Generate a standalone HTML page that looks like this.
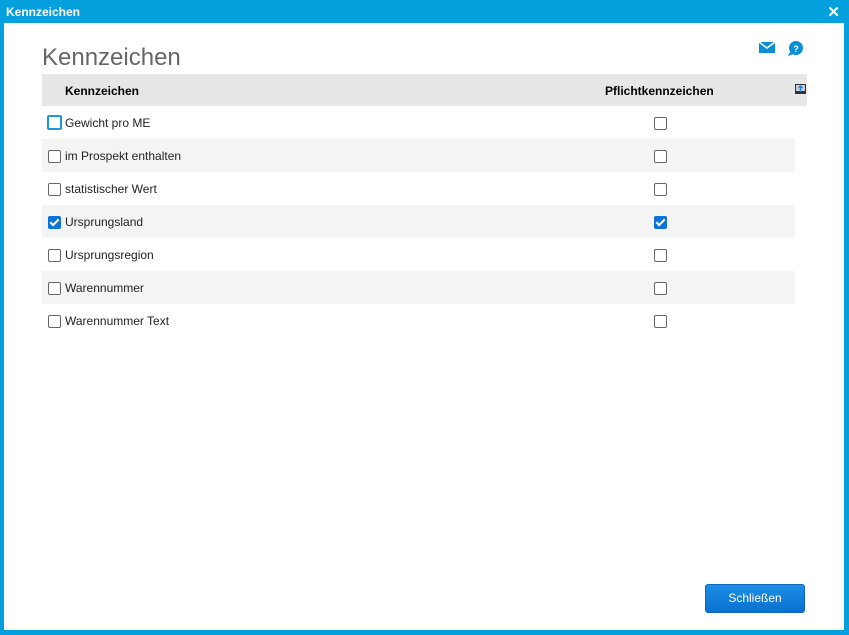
<!DOCTYPE html>
<html><head><style>
body{margin:0;width:849px;height:635px;background:#049fdd;font-family:"Liberation Sans",sans-serif;position:relative;overflow:hidden}
.title{position:absolute;left:6px;top:5px;color:#fff;font-weight:bold;font-size:12px}
.x{position:absolute;right:9px;top:3px;color:#fff;font-weight:bold;font-size:15px}
.win{position:absolute;left:4px;top:23px;width:840px;height:607px;background:#fff}
h1{position:absolute;left:38px;top:21px;margin:0;font-weight:normal;font-size:24px;color:#666}
.hdr{position:absolute;left:38px;top:51px;width:765px;height:32px;background:#e7e7e7;font-weight:bold;font-size:12px;color:#000}
.row{position:absolute;left:38px;width:753px;height:33px;font-size:12px;color:#222}
.g{background:#f4f4f4}
.cb{position:absolute;width:11px;height:11px;border:1px solid #666;border-radius:2px;background:#fff}
.ck{background:#0b73d9;border-color:#0b73d9}
.ck:after{content:"";position:absolute;left:3px;top:0px;width:3px;height:7px;border:solid #fff;border-width:0 2px 2px 0;transform:rotate(45deg)}
.btn{position:absolute;left:701px;top:561px;width:98px;height:27px;border-radius:3px;background:linear-gradient(#1c8fe6,#0a70cf);border:1px solid #0b68c0;color:#fff;font-size:12px;text-align:center;line-height:27px}
</style></head><body>
<div class="title">Kennzeichen</div><div class="x">✕</div>
<div class="win">
<h1>Kennzeichen</h1>
<svg style="position:absolute;left:755px;top:19px" width="16" height="12"><rect x="0" y="0" width="16" height="11" fill="#0a8fd8"/><path d="M0 0L8 6L16 0" stroke="#fff" stroke-width="1.5" fill="none"/></svg>
<svg style="position:absolute;left:783px;top:18px" width="16" height="16"><circle cx="9" cy="7" r="7" fill="#0a8fd8"/><path d="M3 11L1 15L7 13z" fill="#0a8fd8"/><text x="9" y="11" font-size="9" font-weight="bold" fill="#fff" text-anchor="middle" font-family="Liberation Sans">?</text></svg>
<div class="hdr"><span style="position:absolute;left:23px;top:10px">Kennzeichen</span><span style="position:absolute;left:563px;top:10px">Pflichtkennzeichen</span>
<svg style="position:absolute;left:753px;top:10px" width="11" height="10"><rect width="11" height="10" fill="#333"/><rect x="1" y="1" width="9" height="6" fill="#ccc"/><path d="M5.5 2V8M3.5 4L5.5 2L7.5 4" stroke="#08f" stroke-width="1.3" fill="none"/></svg></div>
<div class="row" style="top:83px"><div class="cb" style="left:5px;top:9px;border:2px solid #1a9be0;width:11px;height:11px"></div><span style="position:absolute;left:23px;top:10px">Gewicht pro ME</span><div class="cb" style="left:612px;top:11px"></div></div>
<div class="row g" style="top:116px"><div class="cb" style="left:6px;top:11px"></div><span style="position:absolute;left:23px;top:10px">im Prospekt enthalten</span><div class="cb" style="left:612px;top:11px"></div></div>
<div class="row" style="top:149px"><div class="cb" style="left:6px;top:11px"></div><span style="position:absolute;left:23px;top:10px">statistischer Wert</span><div class="cb" style="left:612px;top:11px"></div></div>
<div class="row g" style="top:182px"><div class="cb ck" style="left:6px;top:11px"></div><span style="position:absolute;left:23px;top:10px">Ursprungsland</span><div class="cb ck" style="left:612px;top:11px"></div></div>
<div class="row" style="top:215px"><div class="cb" style="left:6px;top:11px"></div><span style="position:absolute;left:23px;top:10px">Ursprungsregion</span><div class="cb" style="left:612px;top:11px"></div></div>
<div class="row g" style="top:248px"><div class="cb" style="left:6px;top:11px"></div><span style="position:absolute;left:23px;top:10px">Warennummer</span><div class="cb" style="left:612px;top:11px"></div></div>
<div class="row" style="top:281px"><div class="cb" style="left:6px;top:11px"></div><span style="position:absolute;left:23px;top:10px">Warennummer Text</span><div class="cb" style="left:612px;top:11px"></div></div>
<div class="btn">Schließen</div>
</div>
</body></html>
